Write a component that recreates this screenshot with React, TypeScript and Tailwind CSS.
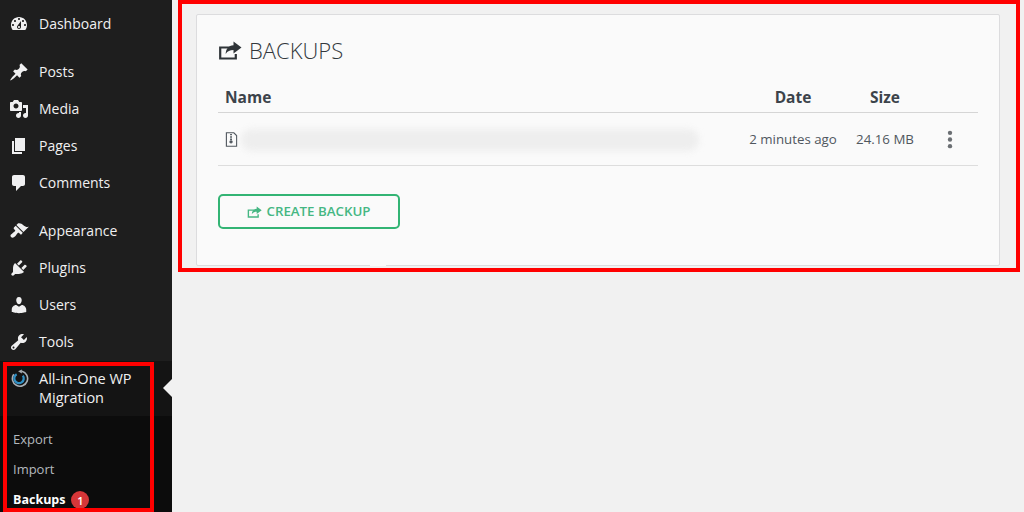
import React from "react";

const P: Record<string, string> = {
  dashboard: "M3.76 16h12.48c1.1-1.37 1.76-3.11 1.76-5 0-4.42-3.58-8-8-8s-8 3.58-8 8c0 1.89.66 3.63 1.76 5zM10 4c.55 0 1 .45 1 1s-.45 1-1 1-1-.45-1-1 .45-1 1-1zM6 6c.55 0 1 .45 1 1s-.45 1-1 1-1-.45-1-1 .45-1 1-1zm8 0c.55 0 1 .45 1 1s-.45 1-1 1-1-.45-1-1 .45-1 1-1zm-5.37 5.55L12 7v6c0 1.1-.9 2-2 2s-2-.9-2-2c0-.57.24-1.08.63-1.45zM4 10c.55 0 1 .45 1 1s-.45 1-1 1-1-.45-1-1 .45-1 1-1zm12 0c.55 0 1 .45 1 1s-.45 1-1 1-1-.45-1-1 .45-1 1-1zm-5 3c0-.55-.45-1-1-1s-1 .45-1 1 .45 1 1 1 1-.45 1-1z",
  posts: "M10.44 3.02l1.82-1.82 6.36 6.35-1.83 1.82c-1.05-.68-2.48-.57-3.41.36l-.75.75c-.92.93-1.04 2.35-.35 3.41l-1.83 1.82-2.41-2.41-2.8 2.79c-.42.42-3.38 2.71-3.8 2.29s1.86-3.39 2.28-3.81l2.79-2.79L4.1 9.36l1.83-1.82c1.05.69 2.48.57 3.4-.36l.75-.75c.93-.92 1.05-2.35.36-3.41z",
  media: "M13 11V4c0-.55-.45-1-1-1h-1.67L9 1H5L3.67 3H2c-.55 0-1 .45-1 1v7c0 .55.45 1 1 1h10c.55 0 1-.45 1-1zM7 4.5c1.38 0 2.5 1.12 2.5 2.5S8.38 9.5 7 9.5 4.5 8.38 4.5 7 5.62 4.5 7 4.5zM14 6h5v10.5c0 1.38-1.12 2.5-2.5 2.5S14 17.88 14 16.5s1.12-2.5 2.5-2.5c.17 0 .34.02.5.05V9h-3V6zm-4 8.05V13h2v3.5c0 1.38-1.12 2.5-2.5 2.5S7 17.88 7 16.5 8.12 14 9.5 14c.17 0 .34.02.5.05z",
  pages: "M6 15V2h10v13H6zm-1 1h8v2H3V5h2v11z",
  comments: "M5 2h9c1.1 0 2 .9 2 2v7c0 1.1-.9 2-2 2h-2l-5 5v-5H5c-1.1 0-2-.9-2-2V4c0-1.1.9-2 2-2z",
  appearance: "M14.48 11.06L7.41 3.99l1.5-1.5c.5-.56 2.3-.47 3.51.32 1.21.8 1.43 1.28 2.91 2.1 1.18.64 2.45 1.26 4.45.85zm-.71.71L6.7 4.7 4.93 6.47c-.39.39-.39 1.02 0 1.41l1.06 1.06c.39.39.39 1.03 0 1.42-.6.6-1.43 1.11-2.21 1.69-.35.26-.7.53-1.01.84C1.43 13.23.99 14.99 2.05 16.05s2.82.62 4.16-.72c.31-.31.58-.66.84-1.01.58-.78 1.09-1.61 1.69-2.21.39-.39 1.03-.39 1.42 0l1.06 1.06c.39.39 1.02.39 1.41 0z",
  plugins: "M13.11 4.36L9.87 7.6 8 5.73l3.24-3.24c.35-.34 1.05-.2 1.56.32.52.51.66 1.21.31 1.55zm-8 1.77l.91-1.12 9.01 9.01-1.19.84c-.71.71-2.63 1.16-3.82 1.16H6.14L4.9 17.26c-.59.59-1.54.59-2.12 0-.59-.58-.59-1.53 0-2.12l1.24-1.24v-3.88c0-1.13.4-3.19 1.09-3.89zm7.26 3.97l3.24-3.24c.34-.35 1.04-.21 1.55.31.52.51.66 1.21.31 1.55l-3.24 3.25z",
  users: "M10 9.25c-2.27 0-2.73-3.44-2.73-3.44C7 4.02 7.82 2 9.97 2c2.16 0 2.98 2.02 2.71 3.81 0 0-.41 3.44-2.68 3.44zm0 2.57L12.72 10c2.39 0 4.52 2.33 4.52 4.53v2.49s-3.65 1.13-7.24 1.13c-3.65 0-7.24-1.13-7.24-1.13v-2.49c0-2.25 1.94-4.48 4.47-4.48z",
  tools: "M16.68 9.77c-1.34 1.34-3.3 1.67-4.95.99l-5.41 6.52c-.99.99-2.59.99-3.58 0s-.99-2.59 0-3.57l6.52-5.42c-.68-1.65-.35-3.61.99-4.95 1.28-1.28 3.12-1.62 4.72-1.06l-2.89 2.89 2.82 2.82 2.86-2.87c.53 1.58.18 3.39-1.08 4.65zM3.81 16.21c.4.39 1.04.39 1.43 0 .4-.4.4-1.04 0-1.43-.39-.4-1.03-.4-1.43 0-.39.39-.39 1.03 0 1.43z",
};

function Item({ icon, label }: { icon: string; label: string }) {
  return (
    <div className="flex h-[37px] items-center pl-[9px] text-[14px] text-[#f0f0f1]">
      <svg viewBox="0 0 20 20" className="h-5 w-5 shrink-0" fill="#f0f0f1" fillRule="evenodd">
        <path d={P[icon]} />
      </svg>
      <span className="ml-[10px]">{label}</span>
    </div>
  );
}

function ShareIcon({ className, color }: { className: string; color: string }) {
  return (
    <svg viewBox="0 0 24 19" className={className} fill="none">
      <path d="M12 6.5H2.2v11h15.6v-4.5" stroke={color} strokeWidth="2.2" />
      <path d="M15.5 0.5l8 6-8 6V9c-3.6 0-6 1-7.8 4 0-4.5 2.8-8.5 7.8-8.8z" fill={color} />
    </svg>
  );
}

export default function App() {
  return (
    <div className="relative flex h-[512px] w-[1024px] overflow-hidden bg-[#f1f1f1] font-['Open_Sans',sans-serif]">
      <aside className="flex w-[172px] shrink-0 flex-col bg-[#1e1e1e] pt-[5px]">
        <Item icon="dashboard" label="Dashboard" />
        <div className="mt-[11px]">
          <Item icon="posts" label="Posts" />
          <Item icon="media" label="Media" />
          <Item icon="pages" label="Pages" />
          <Item icon="comments" label="Comments" />
        </div>
        <div className="mt-[11px]">
          <Item icon="appearance" label="Appearance" />
          <Item icon="plugins" label="Plugins" />
          <Item icon="users" label="Users" />
          <Item icon="tools" label="Tools" />
        </div>
        <div className="relative mt-[1px] flex h-[55px] items-start bg-[#141414] pl-[10px] pt-[8px] text-[14.5px] leading-[19px] text-[#f0f0f1]">
          <svg viewBox="0 0 20 20" className="h-[19px] w-[19px] shrink-0" fill="none">
            <path d="M4 5.5A8 8 0 1 0 12.5 2.4" stroke="#a8afb5" strokeWidth="1.7" />
            <path d="M7 5.6A5 5 0 1 0 13.5 7" stroke="#2f8fc4" strokeWidth="2.4" />
            <path d="M8.5 2.4l4-2v4.4z" fill="#a8afb5" />
          </svg>
          <span className="ml-[10px]">All-in-One WP<br />Migration</span>
          <span className="absolute right-0 top-[18px] h-0 w-0 border-y-[9px] border-r-[9px] border-y-transparent border-r-[#f1f1f1]" />
        </div>
        <div className="min-h-0 flex-1 bg-[#0c0c0c] pl-[13px] pt-[8px] text-[13px] leading-[30px] text-[#b4b9be]">
          <div>Export</div>
          <div>Import</div>
          <div className="mt-[1px] flex items-center text-[12.5px] font-bold text-white">
            Backups
            <span className="ml-[6px] flex h-[18px] w-[18px] items-center justify-center rounded-full bg-[#d63638] text-[11px] font-semibold leading-none text-white">1</span>
          </div>
        </div>
      </aside>
      <main className="flex-1 pl-[24px] pr-[24px] pt-[14px]">
        <section className="relative h-[252px] rounded-[2px] border border-[#dcdcde] bg-[#fafafa] pl-[21px] pr-[21px] pt-[22px] text-[#3c434a]">
          <h1 className="flex h-[26px] items-center text-[22px] font-light leading-none text-[#32373c]">
            <ShareIcon className="mr-[7px] h-[19px] w-[24px]" color="#2f3438" />
            BACKUPS
          </h1>
          <div className="mt-[13px] grid h-[37px] grid-cols-[530px_90px_94px_46px] items-center border-b border-[#d5d5d5] pt-[8px] text-[15.5px] font-bold">
            <div className="pl-[7px]">Name</div>
            <div className="text-center">Date</div>
            <div className="text-center">Size</div>
            <div />
          </div>
          <div className="grid h-[53px] grid-cols-[530px_90px_94px_46px] items-center border-b border-[#dddddd] pt-[1px] text-[13.3px] text-[#50575e]">
            <div className="flex items-center pl-[7px]">
              <svg viewBox="0 0 14 16" className="h-[15px] w-[13px] shrink-0" fill="none" stroke="#50575e" strokeWidth="1.2">
                <path d="M1.5.8h8l3 3v11.4h-11z" />
                <path d="M6.5 2v7" strokeWidth="2" strokeDasharray="1.5 1" />
                <circle cx="6.5" cy="10.5" r="1.2" fill="#50575e" />
              </svg>
              <div className="ml-[3px] h-[22px] w-[458px] rounded-full bg-[#eeeeee] blur-[3px]" />
            </div>
            <div className="whitespace-nowrap text-center">2 minutes ago</div>
            <div className="whitespace-nowrap text-center">24.16 MB</div>
            <div className="ml-[-10px] flex justify-center">
              <svg viewBox="0 0 6 20" className="h-[19px] w-[6px]" fill="#6b6f73">
                <circle cx="3" cy="3" r="2.3" />
                <circle cx="3" cy="10" r="2.3" />
                <circle cx="3" cy="17" r="2.3" />
              </svg>
            </div>
          </div>
          <button className="mt-[28px] flex h-[35px] w-[182px] items-center justify-center rounded-[5px] border-2 border-[#33b474] text-[13.3px] font-semibold text-[#45b783]">
            <ShareIcon className="mr-[4px] h-[12px] w-[15px]" color="#45b783" />
            CREATE BACKUP
          </button>
          <div className="absolute bottom-[-1px] left-[173px] h-[2px] w-[16px] bg-[#fafafa]" />
        </section>
      </main>
      <div className="pointer-events-none absolute left-[178px] top-0 h-[272px] w-[842px] border-[4px] border-[#ff0000]" />
      <div className="pointer-events-none absolute left-[3px] top-[362px] h-[150px] w-[151px] border-[4px] border-[#ff0000]" />
    </div>
  );
}
